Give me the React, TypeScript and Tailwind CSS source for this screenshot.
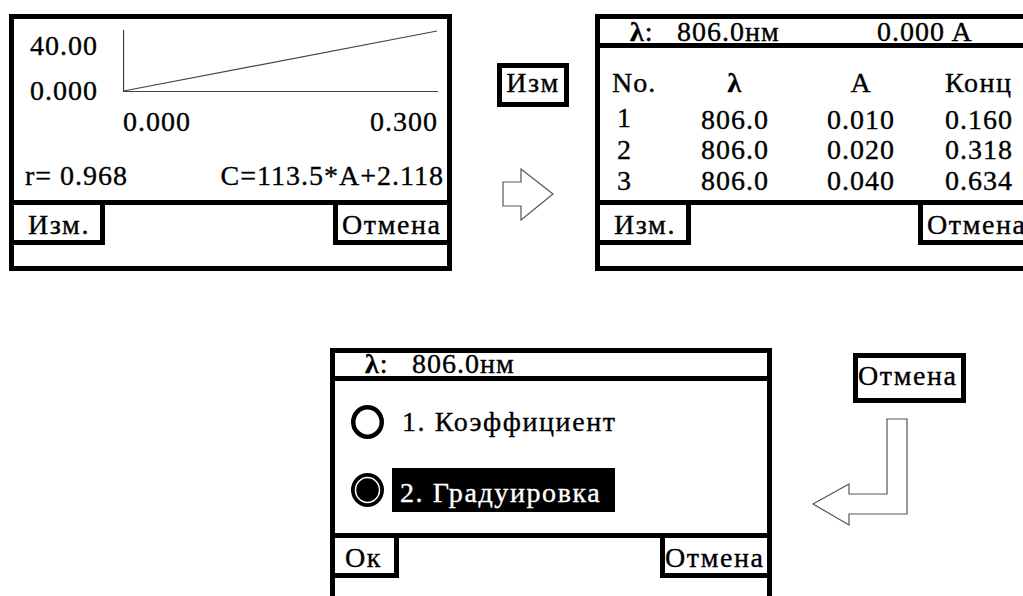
import type { ReactNode } from "react";

// Calibration screens of a spectrophotometer, laid out as a flow diagram

function RadioEmpty() {
  return (
    <svg width="33" height="34" viewBox="0 0 33 34" className="shrink-0">
      <ellipse cx="16.5" cy="17" rx="14.25" ry="14.75" fill="white" stroke="black" strokeWidth="4.5" />
    </svg>
  );
}

function RadioFilled() {
  return (
    <svg width="33" height="34" viewBox="0 0 33 34" className="shrink-0">
      <ellipse cx="16.5" cy="17" rx="16.5" ry="17" fill="black" />
      <ellipse cx="16.5" cy="17" rx="12" ry="12.5" fill="none" stroke="white" strokeWidth="1.5" />
    </svg>
  );
}

function Divider() {
  return <div className="h-[5px] shrink-0 bg-black" />;
}

function ButtonRow({
  left,
  leftW,
  leftPl,
  right,
  rightW,
  rightPl,
}: {
  left: string;
  leftW: string;
  leftPl: string;
  right: string;
  rightW: string;
  rightPl: string;
}) {
  return (
    <div className="flex h-[40px] shrink-0 items-start justify-between tracking-[1.6px]">
      <div className={`h-[40px] border-r-[5px] border-b-[5px] border-black pt-[6px] ${leftW} ${leftPl}`}>{left}</div>
      <div className={`h-[40px] whitespace-nowrap border-l-[5px] border-b-[5px] border-black pt-[6px] ${rightW} ${rightPl}`}>
        {right}
      </div>
    </div>
  );
}

function Panel({ className, children }: { className: string; children: ReactNode }) {
  return (
    <div className={`absolute flex h-[257px] flex-col border-[5px] border-black bg-white ${className}`}>{children}</div>
  );
}

const rows = [
  ["1", "806.0", "0.010", "0.160"],
  ["2", "806.0", "0.020", "0.318"],
  ["3", "806.0", "0.040", "0.634"],
];

export default function App() {
  return (
    <div className="font-serif">
      <div className="relative h-[596px] w-[1023px] overflow-hidden bg-white font-[Liberation_Serif] text-[28px] leading-[28px] tracking-[1px] text-black [-webkit-text-stroke:0.35px]">
        {/* Graph screen */}
        <Panel className="left-[9px] top-[14px] w-[443px]">
          <div className="flex h-[181px] shrink-0 flex-col">
            <div className="flex items-start">
              <div className="flex w-[84px] flex-col items-end gap-[17px] pt-[12.5px]">
                <span>40.00</span>
                <span>0.000</span>
              </div>
              <svg width="315" height="62" viewBox="0 0 315 62" className="ml-[25px] mt-[11px]">
                <line x1="0.5" y1="0" x2="0.5" y2="62" stroke="#333" strokeWidth="1.2" />
                <line x1="0" y1="61.5" x2="315" y2="61.5" stroke="#444" strokeWidth="1.2" />
                <line x1="0.5" y1="61" x2="314" y2="1" stroke="#444" strokeWidth="1.2" />
              </svg>
            </div>
            <div className="ml-[109px] mt-[3px] flex w-[315px] justify-between">
              <span>0.000</span>
              <span>0.300</span>
            </div>
            <div className="mt-[26px] flex justify-between pl-[11px] pr-[3px]">
              <span>r= 0.968</span>
              <span>C=113.5*A+2.118</span>
            </div>
          </div>
          <Divider />
          <ButtonRow left="Изм." leftW="w-[91px]" leftPl="pl-[14px]" right="Отмена" rightW="w-[114px]" rightPl="pl-[4px]" />
        </Panel>

        {/* Table screen */}
        <Panel className="left-[595px] top-[14px] w-[443px]">
          <div className="flex h-[24px] shrink-0 whitespace-nowrap pl-[30px] leading-[26px]">
            <span className="w-[47px]">
              <span className="font-bold">λ</span>:
            </span>
            <span className="w-[200px]">806.0нм</span>
            <span>0.000 A</span>
          </div>
          <Divider />
          <div className="h-[152px] shrink-0 pt-[20.5px]">
            <div className="grid h-[37px] grid-cols-[75px_120px_132px_1fr]">
              <span className="pl-[12px]">No.</span>
              <span className="text-center font-bold">λ</span>
              <span className="text-center">A</span>
              <span className="pl-[18px] tracking-[1.6px]">Конц</span>
            </div>
            {rows.map((r, i) => (
              <div key={r[0]} className={`grid grid-cols-[75px_120px_132px_1fr] ${i === 0 ? "h-[30px]" : "h-[31px]"}`}>
                <span className={`pl-[17px] ${i === 0 ? "-mt-[2px]" : ""}`}>{r[0]}</span>
                <span className="text-center">{r[1]}</span>
                <span className="text-center">{r[2]}</span>
                <span className="pl-[18px]">{r[3]}</span>
              </div>
            ))}
          </div>
          <Divider />
          <ButtonRow left="Изм." leftW="w-[91px]" leftPl="pl-[14px]" right="Отмена" rightW="w-[115px]" rightPl="pl-[4px]" />
        </Panel>

        {/* Mode choice screen */}
        <Panel className="left-[330px] top-[348px] w-[442px]">
          <div className="flex h-[23px] shrink-0 whitespace-nowrap pl-[30px] leading-[22px]">
            <span className="w-[47px]">
              <span className="font-bold">λ</span>:
            </span>
            <span>806.0нм</span>
          </div>
          <Divider />
          <div className="flex h-[152px] shrink-0 flex-col pt-[18.5px] tracking-[1.6px]">
            <div className="flex h-[44px] items-center pl-[16px]">
              <RadioEmpty />
              <span className="ml-[10px] whitespace-nowrap px-[8px]">1. Коэффициент</span>
            </div>
            <div className="mt-[24.5px] flex h-[44px] items-center pl-[16px]">
              <RadioFilled />
              <span className="ml-[8px] h-[44px] whitespace-nowrap bg-black pl-[8px] pr-[14px] pt-[10.5px] text-white">
                2. Градуировка
              </span>
            </div>
          </div>
          <Divider />
          <ButtonRow left="Ок" leftW="w-[64px]" leftPl="pl-[10px]" right="Отмена" rightW="w-[107px]" rightPl="pl-0" />
        </Panel>

        {/* Key labels */}
        <div className="absolute left-[497px] top-[63px] flex h-[44px] w-[72px] justify-center border-[5px] border-black pt-[1px] tracking-[1.6px]">
          Изм
        </div>
        <div className="absolute left-[853px] top-[353px] h-[50px] w-[113px] border-[5px] border-black pt-[3.5px] tracking-[1.6px]">
          Отмена
        </div>

        {/* Arrows */}
        <svg width="58" height="60" viewBox="0 0 58 60" className="absolute left-[500px] top-[165px]">
          <polygon points="3,17 21,17 21,4 53,29 21,55 21,41 3,41" fill="white" stroke="#555" strokeWidth="1.2" />
        </svg>
        <svg width="100" height="112" viewBox="0 0 100 112" className="absolute left-[810px] top-[416px]">
          <polygon
            points="77,3 97,3 97,98 39,98 39,109 3,88 39,68 39,78 77,78"
            fill="white"
            stroke="#555"
            strokeWidth="1.2"
          />
        </svg>
      </div>
    </div>
  );
}
